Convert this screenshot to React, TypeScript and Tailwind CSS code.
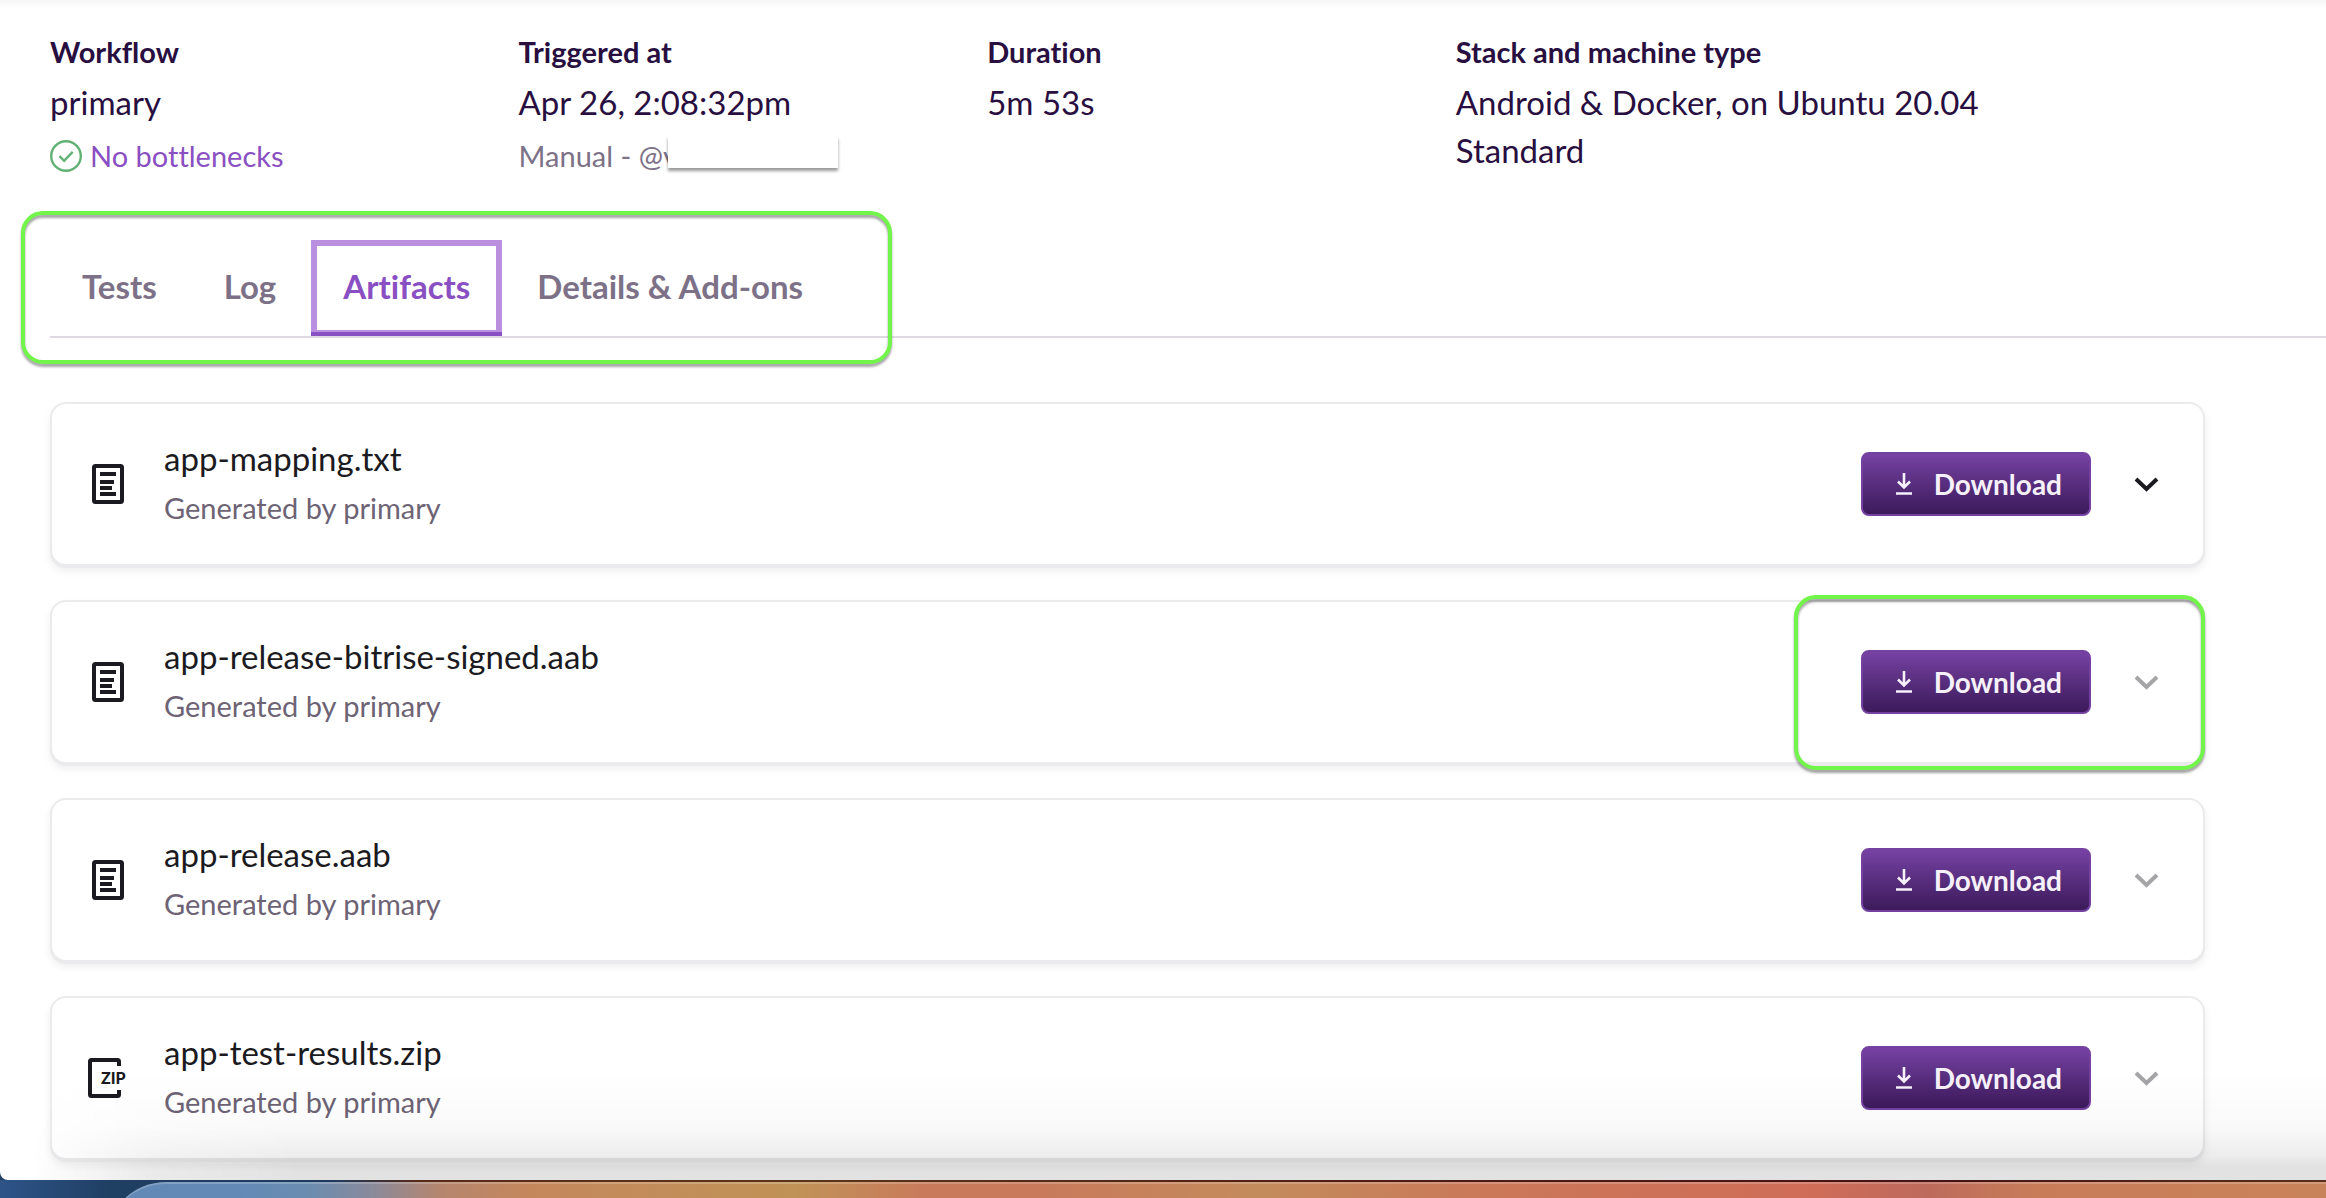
import type { ReactNode } from 'react';

type Artifact = { name: string; kind: 'doc' | 'zip'; active?: boolean; highlighted?: boolean };

const artifacts: Artifact[] = [
  { name: 'app-mapping.txt', kind: 'doc', active: true },
  { name: 'app-release-bitrise-signed.aab', kind: 'doc', highlighted: true },
  { name: 'app-release.aab', kind: 'doc' },
  { name: 'app-test-results.zip', kind: 'zip' },
];

const tabs = ['Tests', 'Log', 'Artifacts', 'Details & Add-ons'];

function CheckCircle() {
  return (
    <svg className="size-8 shrink-0" viewBox="0 0 32 32" fill="none" stroke="#62b175" aria-hidden="true">
      <circle cx="16" cy="16" r="14.8" strokeWidth="2.4" />
      <path d="M9.5 16.2l4.6 4.6 8.6-9" strokeWidth="2.4" />
    </svg>
  );
}

function DocIcon() {
  return (
    <svg className="size-12 shrink-0" viewBox="0 0 48 48" fill="none" aria-hidden="true">
      <rect x="10" y="6" width="28" height="36" rx="1.5" stroke="#1b1a21" strokeWidth="4" />
      <path d="M16 14h16M16 22h14M16 28h12M16 34h16" stroke="#1b1a21" strokeWidth="4" />
    </svg>
  );
}

function ZipIcon() {
  return (
    <svg className="size-12 shrink-0" viewBox="0 0 48 48" fill="none" aria-hidden="true">
      <path d="M35 12V7.5Q35 6 33.5 6H7.5Q6 6 6 7.5V40.5Q6 42 7.5 42H33.5Q35 42 35 40.5V36" stroke="#1b1a21" strokeWidth="4" />
      <text x="17" y="30" fontSize="16" fontWeight="900" fill="#1b1a21">
        ZIP
      </text>
    </svg>
  );
}

function DownloadIcon() {
  return (
    <svg className="size-7 shrink-0" viewBox="0 0 28 28" fill="none" stroke="#f5f0f9" strokeWidth="2.6" aria-hidden="true">
      <path d="M14 3v14M8 11.5l6 6 6-6M6 23.5h16" />
    </svg>
  );
}

function Chevron() {
  return (
    <svg className="size-12" viewBox="0 0 48 48" fill="none" stroke="currentColor" strokeWidth="4" aria-hidden="true">
      <path d="M13 19L23.5 29 34 19" />
    </svg>
  );
}

function Info({ label, children }: { label: string; children: ReactNode }) {
  return (
    <div>
      <dt className="mb-2 text-[29px] leading-10 font-bold">{label}</dt>
      {children}
    </div>
  );
}

function Value({ children }: { children: ReactNode }) {
  return <dd className="mb-1 text-[33px] leading-11">{children}</dd>;
}

function Highlight({ className }: { className: string }) {
  return (
    <div
      className={`pointer-events-none absolute z-10 rounded-[22px] border-4 border-[#72f54a] drop-shadow-[0_3px_1px_rgba(0,0,0,0.35)] ${className}`}
    />
  );
}

function ArtifactCard({ name, kind, active, highlighted }: Artifact) {
  return (
    <li className="relative flex h-[164px] items-center gap-8 rounded-2xl border-2 border-[#ebeaec] bg-white px-8 shadow-[0_2px_0_#ebeaec,0_5px_8px_rgba(0,0,0,0.07)]">
      {kind === 'zip' ? <ZipIcon /> : <DocIcon />}
      <div className="flex-1">
        <h3 className="mb-1 text-[33px] leading-11 text-[#1b1a21]">{name}</h3>
        <p className="text-[29px] leading-12 text-[#6d6375]">Generated by primary</p>
      </div>
      <button
        type="button"
        className="flex h-16 items-center gap-4 rounded-lg border-2 border-[#7441a0] bg-linear-to-b from-[#7642a3] to-[#3c1a5b] px-[27px] text-[28px] font-bold text-[#f5f0f9]"
      >
        <DownloadIcon />
        Download
      </button>
      <button type="button" aria-label={`Show details of ${name}`} className={active ? 'text-[#1b1a21]' : 'text-[#a5a4a7]'}>
        <Chevron />
      </button>
      {highlighted && <Highlight className="-top-[7px] -right-0.5 -bottom-2 w-[411px]" />}
    </li>
  );
}

export default function App() {
  return (
    <div className="flex min-h-screen flex-col bg-[#1f3f63] font-['Lato',sans-serif] text-[#280f3f] [font-variant-ligatures:none]">
      <main className="relative flex-1 overflow-hidden rounded-bl-lg bg-white pt-8 pb-5 pl-[50px]">
        <div className="absolute inset-x-0 top-0 h-2 bg-linear-to-b from-[#f6f6f6] to-white" />

        <dl className="grid h-[145px] grid-cols-[7fr_7fr_7fr_13fr]">
          <Info label="Workflow">
            <Value>primary</Value>
            <dd className="mt-3">
              <a href="#bottlenecks" className="flex items-center gap-2 text-[29px] leading-10 text-[#8a4fc2]">
                <CheckCircle />
                No bottlenecks
              </a>
            </dd>
          </Info>
          <Info label="Triggered at">
            <Value>Apr 26, 2:08:32pm</Value>
            <dd className="mt-3 flex items-start text-[29px] leading-10 text-[#7d7188]">
              Manual - @v
              <span className="-ml-2.5 h-8 w-[170px] bg-white shadow-[0_3px_3px_rgba(0,0,0,0.4)]" />
            </dd>
          </Info>
          <Info label="Duration">
            <Value>5m 53s</Value>
          </Info>
          <Info label="Stack and machine type">
            <Value>Android &amp; Docker, on Ubuntu 20.04</Value>
            <Value>Standard</Value>
          </Info>
        </dl>

        <nav className="relative mt-[63px] border-b-2 border-[#dfdae1]">
          <div role="tablist" className="flex gap-[3px]">
            {tabs.map((tab) =>
              tab === 'Artifacts' ? (
                <button
                  key={tab}
                  type="button"
                  role="tab"
                  aria-selected="true"
                  className="h-24 border-b-4 border-[#8a4fc2] px-8 pt-0.5 text-[33px] font-bold text-[#8a4fc2] shadow-[inset_6px_6px_0_#bb8fe0,inset_-6px_-2px_0_#bb8fe0]"
                >
                  {tab}
                </button>
              ) : (
                <button key={tab} type="button" role="tab" aria-selected="false" className="h-24 px-8 pb-0.5 text-[33px] font-bold text-[#7d7188]">
                  {tab}
                </button>
              ),
            )}
          </div>
          <Highlight className="-top-[29px] -left-[29px] h-[153px] w-[871px]" />
        </nav>

        <ul className="mt-16 mr-[121px] flex flex-col gap-[34px]">
          {artifacts.map((artifact) => (
            <ArtifactCard key={artifact.name} {...artifact} />
          ))}
        </ul>

        <div className="pointer-events-none absolute right-0 bottom-0 left-0 h-[110px] bg-[linear-gradient(to_bottom,transparent,rgba(0,0,0,0.02)_50%,rgba(0,0,0,0.07)_78%,rgba(0,0,0,0.115)_88%,rgba(0,0,0,0.115))] [mask-image:linear-gradient(to_right,transparent_30px,rgba(0,0,0,0.7)_150px,black_300px)]" />
      </main>

      <footer className="h-[18px] overflow-hidden bg-[linear-gradient(to_right,#2e5488,#1f3f63_110px,#1f3a5c_330px,#552a18_420px,#5a3418_800px,#4d1c14_1400px,#451216_1950px,#5a2e18)] pt-0.5 pl-[106px]">
        <div className="h-20 rounded-tl-[60px] border-t-2 border-white/20 bg-[linear-gradient(to_right,#6289b5,#638ab6_6%,#6a8cb0_9%,#8a8a9b_12%,#b5866f_15%,#c4875c_19%,#c09257_31%,#c97a5b_37%,#c97a5b_42%,#c38b5c_52%,#cb7758_63%,#cf6c58_77%,#bd6a5c_82%,#c87d58_87%,#c9835a)] bg-origin-border" />
      </footer>
    </div>
  );
}
